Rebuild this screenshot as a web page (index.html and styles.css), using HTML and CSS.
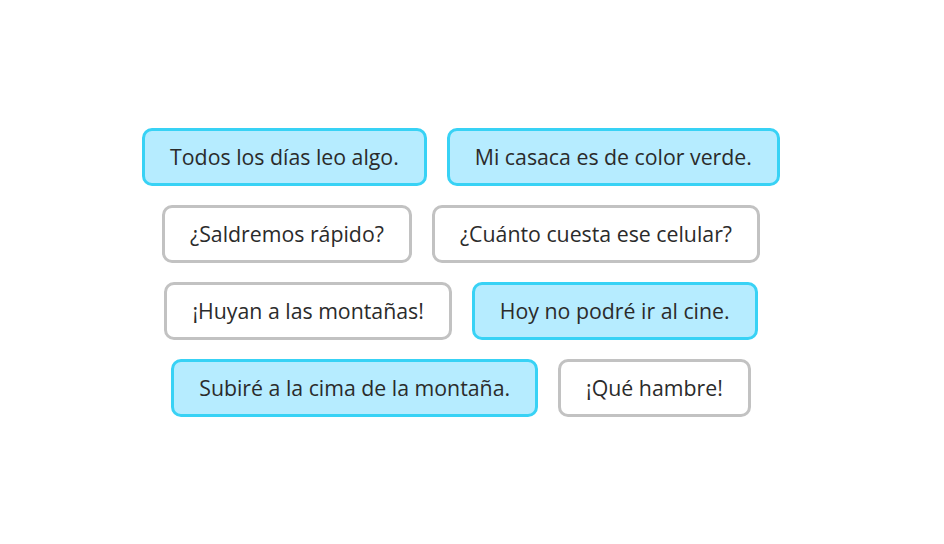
FILE: index.html
```html
<!DOCTYPE html>
<html lang="es">
<head>
<meta charset="utf-8">
<title>Frases</title>
<link rel="stylesheet" href="styles.css">
</head>
<body>
<main class="stage">
  <div class="row">
    <button class="chip chip--on">Todos los días leo algo.</button>
    <button class="chip chip--on">Mi casaca es de color verde.</button>
  </div>
  <div class="row">
    <button class="chip">¿Saldremos rápido?</button>
    <button class="chip">¿Cuánto cuesta ese celular?</button>
  </div>
  <div class="row">
    <button class="chip">¡Huyan a las montañas!</button>
    <button class="chip chip--on">Hoy no podré ir al cine.</button>
  </div>
  <div class="row">
    <button class="chip chip--on">Subiré a la cima de la montaña.</button>
    <button class="chip">¡Qué hambre!</button>
  </div>
</main>
</body>
</html>
```
FILE: styles.css
```css
html, body {
  margin: 0;
  padding: 0;
  background: #ffffff;
}
.stage {
  width: 922px;
  height: 545px;
  display: flex;
  flex-direction: column;
  justify-content: center;
  align-items: center;
  gap: 19px;
}
.row {
  display: flex;
  justify-content: center;
  gap: 20px;
}
.chip {
  box-sizing: border-box;
  height: 58px;
  padding: 0 25px 1px;
  border: 3px solid #c2c2c2;
  border-radius: 10px;
  background: #ffffff;
  color: #2b2b2b;
  font-family: "Open Sans", "Noto Sans", sans-serif;
  font-size: 21.3px;
  line-height: 1;
  white-space: nowrap;
  cursor: pointer;
}
.chip--on {
  background: #b6ecff;
  border-color: #38d2f5;
}
```
